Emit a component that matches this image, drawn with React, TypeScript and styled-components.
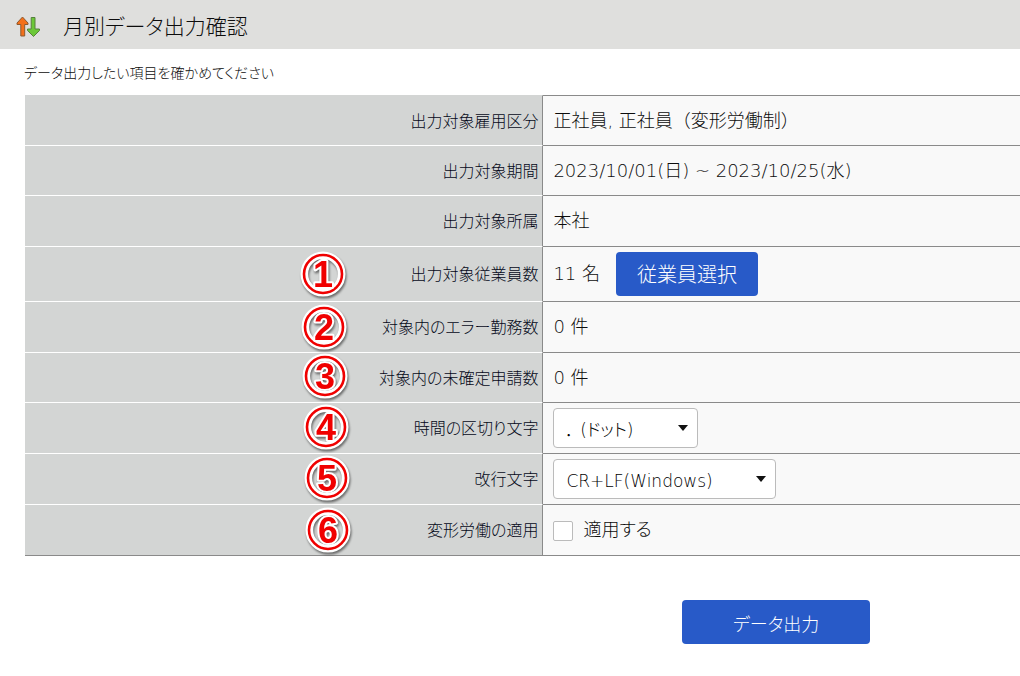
import React from "react";
import styled, { createGlobalStyle } from "styled-components";

const GlobalStyle = createGlobalStyle`
  *, *::before, *::after { box-sizing: border-box; }
  body {
    margin: 0;
    background: #fff;
    color: #0c0c0c;
    font-family: "DejaVu Sans", "Noto Sans CJK JP", sans-serif;
    font-size: 18px;
    font-weight: 300;
    font-feature-settings: "palt";
  }
  button, select, input { font: inherit; font-feature-settings: inherit; }
`;

const Header = styled.header`
  display: flex;
  align-items: center;
  gap: 22px;
  height: 49px;
  padding: 5px 16px 0;
  background: #dfdfdd;
`;

const Title = styled.h1`
  margin: 0;
  font-size: 21px;
  font-weight: inherit;
  line-height: 32px;
`;

const Lead = styled.p`
  margin: 0;
  padding: 12px 24px 10px;
  font-size: 14px;
  line-height: 24px;
`;

const Main = styled.main`
  padding-left: 25px;
`;

const SettingsTable = styled.table`
  width: 100%;
  table-layout: fixed;
  border-spacing: 0;
  border-bottom: 1px solid #8a8a8a;
`;

const Row = styled.tr<{ $height: number }>`
  height: ${(p) => p.$height}px;
`;

const Label = styled.th`
  position: relative;
  width: 52.1%;
  padding: 2px 4px 0;
  border-top: 1px solid #fff;
  border-right: 1px solid #8a8a8a;
  background: #d3d5d4;
  color: #040818;
  font-size: 16px;
  font-weight: inherit;
  line-height: 24px;
  text-align: right;
  tr:first-child > & { border-top-color: #d3d5d4; }
`;

const Value = styled.td<{ $fullWidth?: boolean }>`
  padding: 0 10px;
  border-top: 1px solid #8a8a8a;
  background: #f9f9f9;
  line-height: 24px;
  font-feature-settings: ${(p) => (p.$fullWidth ? "normal" : "inherit")};
`;

const Inline = styled.div`
  display: flex;
  align-items: center;
  gap: 16px;
`;

const Button = styled.button<{ $width: number; $size: number }>`
  width: ${(p) => p.$width}px;
  height: 44px;
  padding: 2px 0 0;
  border: 0;
  border-radius: 4px;
  background: #285ac8;
  color: #fff;
  font-size: ${(p) => p.$size}px;
`;

const SelectBox = styled.span<{ $width: number }>`
  position: relative;
  display: block;
  width: ${(p) => p.$width}px;
`;

const Select = styled.select`
  display: block;
  width: 100%;
  height: 40px;
  padding: 3px 12px 0;
  border: 1px solid #bbb;
  border-radius: 4px;
  background: #fff;
  color: #000;
  font-size: 17px;
  appearance: none;
`;

const Caret = styled.span`
  position: absolute;
  top: 17px;
  right: 10px;
  border: solid transparent;
  border-width: 6px 5px 0;
  border-top-color: #111;
  pointer-events: none;
`;

const CheckLabel = styled.label`
  display: flex;
  align-items: center;
  gap: 10px;
`;

const Checkbox = styled.input`
  width: 20px;
  height: 20px;
  margin: 2px 0 0;
  border: 1px solid #bbb;
  border-radius: 2px;
  background: #fff;
  appearance: none;
  &:checked { background: #285ac8; }
`;

const Footer = styled.footer`
  display: flex;
  justify-content: center;
  padding: 44px 0 31px 51%;
`;

const BadgeSvg = styled.svg<{ $right: number; $top: number }>`
  position: absolute;
  right: ${(p) => p.$right}px;
  top: ${(p) => p.$top}px;
  z-index: 1;
  filter: drop-shadow(1px 2px 1px rgba(0, 0, 0, 0.5));
`;

type Mark = { n: string; right: number; top: number };

function Badge({ n, right, top }: Mark) {
  return (
    <BadgeSvg $right={right} $top={top} width="48" height="48" viewBox="0 0 48 48">
      <circle cx="24" cy="24" r="18.7" fill="none" stroke="#fff" strokeWidth="7.6" />
      <circle cx="24" cy="24" r="19" fill="none" stroke="#f00000" strokeWidth="2.6" />
      <text
        x="24"
        y="36.5"
        textAnchor="middle"
        fontFamily="'Liberation Sans', sans-serif"
        fontSize="36"
        fontWeight="700"
        fill="#f00000"
        stroke="#fff"
        strokeWidth="4"
        strokeLinejoin="round"
        paintOrder="stroke"
      >
        {n}
      </text>
    </BadgeSvg>
  );
}

function SortIcon() {
  return (
    <svg width="25" height="22" viewBox="0 0 25 22" aria-hidden="true">
      <path d="M6.5 1 L12 7 V8.5 H8.7 V20 H4.8 V8.5 H1 V7 Z" fill="#f4701a" stroke="#8c5a30" strokeLinejoin="round" />
      <path d="M15.2 1.5 H19 V13 H23.5 V14.5 L17.5 20.5 L11.5 14.5 V13 H15.2 Z" fill="#6cc838" stroke="#56803c" strokeLinejoin="round" />
    </svg>
  );
}

type Item = {
  label: string;
  height: number;
  mark?: Mark;
  control?: string;
  fullWidth?: boolean;
  value: React.ReactNode;
};

const items: Item[] = [
  { label: "出力対象雇用区分", height: 50, fullWidth: true, value: "正社員, 正社員（変形労働制）" },
  { label: "出力対象期間", height: 50, value: "2023/10/01(日) ~ 2023/10/25(水)" },
  { label: "出力対象所属", height: 51, value: "本社" },
  {
    label: "出力対象従業員数",
    height: 55,
    mark: { n: "1", right: 195, top: 3 },
    value: (
      <Inline>
        <span>11 名</span>
        <Button type="button" $width={142} $size={20}>従業員選択</Button>
      </Inline>
    ),
  },
  { label: "対象内のエラー勤務数", height: 51, mark: { n: "2", right: 194, top: 1 }, value: "0 件" },
  { label: "対象内の未確定申請数", height: 50, mark: { n: "3", right: 193, top: -1 }, value: "0 件" },
  {
    label: "時間の区切り文字",
    height: 51,
    control: "separator",
    mark: { n: "4", right: 192, top: 0 },
    value: (
      <SelectBox $width={145}>
        <Select id="separator"><option>{"．\u00a0(ドット)"}</option></Select>
        <Caret />
      </SelectBox>
    ),
  },
  {
    label: "改行文字",
    height: 51,
    control: "newline",
    mark: { n: "5", right: 191, top: 0 },
    value: (
      <SelectBox $width={223}>
        <Select id="newline"><option>CR+LF(Windows)</option></Select>
        <Caret />
      </SelectBox>
    ),
  },
  {
    label: "変形労働の適用",
    height: 51,
    mark: { n: "6", right: 190, top: 1 },
    value: (
      <CheckLabel>
        <Checkbox type="checkbox" />
        適用する
      </CheckLabel>
    ),
  },
];

export default function App() {
  return (
    <>
      <GlobalStyle />
      <Header>
        <SortIcon />
        <Title>月別データ出力確認</Title>
      </Header>
      <Lead>データ出力したい項目を確かめてください</Lead>
      <Main>
        <SettingsTable>
          <tbody>
            {items.map((item) => (
              <Row key={item.label} $height={item.height}>
                <Label scope="row">
                  {item.mark && <Badge {...item.mark} />}
                  {item.control ? <label htmlFor={item.control}>{item.label}</label> : item.label}
                </Label>
                <Value $fullWidth={item.fullWidth}>{item.value}</Value>
              </Row>
            ))}
          </tbody>
        </SettingsTable>
        <Footer>
          <Button type="button" $width={188} $size={18}>データ出力</Button>
        </Footer>
      </Main>
    </>
  );
}
